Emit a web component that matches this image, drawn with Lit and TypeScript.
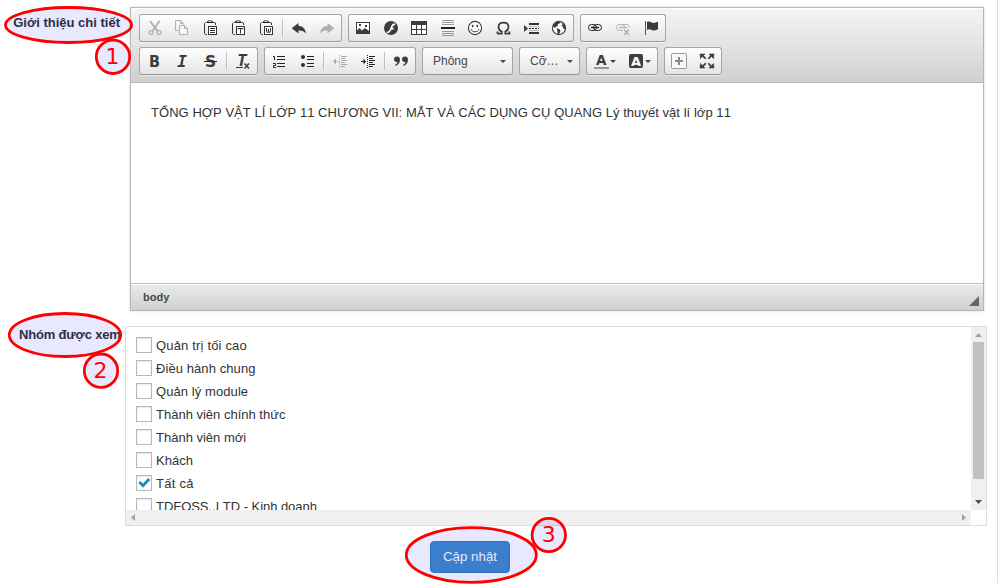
import { LitElement, html, css, svg } from "lit";
import { customElement, property } from "lit/decorators.js";

const D = "#3c3c3c";
const G = "#b0b0b0";
const clip = svg`<path d="M4.500 2.500H3.500L2.500 3.500V13.500L3.500 14.500H5M11.500 2.500H13L13.500 3V5" fill="none" stroke="#333"/><path d="M5 3V1.500L6 .5H10L11 1.500V3z" fill="#222"/><path d="M6.500 1.500h3" stroke="#ccc"/><rect x="6.500" y="6.500" width="8" height="8" fill="#fff" stroke="#333"/>`;
const sans = "DejaVu Sans, sans-serif";
const mono = "DejaVu Sans Mono, monospace";

const icons: Record<string, unknown> = {
  cut: svg`<path d="M4 1L11.500 11M13.500 1L6.500 11" stroke=${G} stroke-width="2" fill="none"/><circle cx="5" cy="12.500" r="1.900" fill="none" stroke=${G} stroke-width="1.300"/><circle cx="13" cy="12.500" r="1.900" fill="none" stroke=${G} stroke-width="1.300"/>`,
  copy: svg`<path d="M4.500 10.500H1.500V.5H6.500L9.500 3.500V4.500M6.500 .5V3.500H9" fill="none" stroke=${G}/><path d="M5.500 5.500H10.500L13.500 8.500V14.500H5.500zM10.500 5.500V8.500H13.500" fill="#fafafa" stroke=${G}/>`,
  paste: svg`${clip}<path d="M8 8.500h5M8 10.500h5M8 12.500h5" stroke="#333"/>`,
  pasteText: svg`${clip}<path d="M8 9.500v-1h5v1M10.500 8.500v5" fill="none" stroke="#333"/>`,
  pasteWord: svg`${clip}<path d="M8.500 8v3l1 2 1-2V9v2l1 2 1-2V8" fill="none" stroke="#333"/>`,
  undo: svg`<path d="M.7 8.300L7.500 3V6C11.500 6 14.500 8.500 15 13.700C13 11 11 10.300 7.500 10.400V13.500z" fill=${D}/>`,
  redo: svg`<path d="M15.300 8.300L8.500 3V6C4.500 6 1.500 8.500 1 13.700C3 11 5 10.300 8.500 10.400V13.500z" fill=${G}/>`,
  image: svg`<rect x="1.500" y="2.500" width="13" height="11" fill="#fff" stroke=${D}/><path d="M2 12V10.500L4.500 8L7 10.500L10 8L14 11V13.500H2z" fill=${D}/><rect x="4" y="4" width="2" height="2" fill=${D}/><rect x="10" y="5" width="2" height="2" fill=${D}/>`,
  flash: svg`<circle cx="8" cy="8" r="7" fill=${D}/><path d="M12.200 3.200C8.500 3.300 8.300 6 7.200 8.500C6.300 10.800 5.500 11.500 3.800 11.800V13.300C6.500 13.300 7.600 11.800 8.500 9.500H10.700V7.700H9.300C10 5.800 10.700 5 12.200 4.900z" fill="#fff"/>`,
  table: svg`<rect x=".5" y="1.500" width="15" height="13" fill="#fff" stroke=${D}/><rect x="0" y="1" width="16" height="4" fill=${D}/><path d="M5.500 5v10M10.500 5v10M1 9.500h14" stroke=${D}/>`,
  rule: svg`<path d="M3 .5h12M3 2.500h12M3 4.500h12M3 11.500h12M3 13.500h12M3 15.500h12" stroke="#999"/><path d="M2 8h14" stroke="#222" stroke-width="2"/>`,
  smiley: svg`<circle cx="8" cy="8" r="6.600" fill="#fff" stroke=${D} stroke-width="1.100"/><ellipse cx="5.700" cy="6" rx=".9" ry="1.300" fill=${D}/><ellipse cx="10.300" cy="6" rx=".9" ry="1.300" fill=${D}/><path d="M4 9C5.200 12.700 10.800 12.700 12 9" fill="none" stroke=${D}/>`,
  omega: svg`<path d="M2.500 14V11.500M2.500 13.700H6.700V11.500C4.200 10.500 3.500 8.500 3.500 7C3.500 4.200 5.500 2.700 8.500 2.700S13.500 4.200 13.500 7C13.500 8.500 12.800 10.500 10.300 11.500V13.700H14.500V11.500" fill="none" stroke=${D} stroke-width="1.700"/>`,
  pageBreak: svg`<path d="M1 5V12L5 8.500z" fill=${D}/><path d="M6 4h10M6 13h10" stroke="#333" stroke-width="2"/><path d="M6 6.500h10M6 10.500h10" stroke="#999" stroke-width=".6"/><path d="M6 8.500h10" stroke="#222" stroke-dasharray="2 1"/>`,
  globe: svg`<circle cx="8" cy="8" r="6.600" fill="#fff" stroke=${D} stroke-width="1.100"/><path d="M2 5L5 2L9 1.800L8.500 3.500L6.500 4.500L7 6.500L5 6.300L4.500 8L2.200 7zM5.500 8.300L8.700 9.200L9.500 11L8 14.300L6.800 14.200L6.300 11zM11 2.500L14 5.500L14.500 9.500L12.500 8.700L12 6.800L10.500 6L11.500 4.500z" fill=${D}/>`,
  link: svg`<g fill="none" stroke="#222"><rect x="1.500" y="4.500" width="8" height="6" rx="3"/><rect x="6.500" y="4.500" width="8" height="6" rx="3"/></g><path d="M4 7.500h8" stroke="#222" stroke-width="1.400"/>`,
  unlink: svg`<g fill="none" stroke=${G}><path d="M8 10.500H4.500a3 3 0 0 1 0-6h2.500a3 3 0 0 1 2.500 2M8 4.500h3.500a3 3 0 0 1 3 3"/></g><path d="M4 7.500h8" stroke=${G} stroke-width="1.400"/><path d="M9 9.500l5 5.500M14 9.500l-5 5.500" stroke=${G} stroke-width="1.500"/>`,
  flag: svg`<path d="M2.500 1v14" stroke="#555"/><path d="M4 2C7 .5 8.500 3.200 10.500 3C12.500 2.900 13 1.800 15 2V9.500C12.500 9.500 12.500 11 10 10.500C7.500 9.800 6.500 8.500 4 10z" fill=${D}/>`,
  bold: svg`<text x="3" y="14" font-family=${sans} font-weight="bold" font-size="16" textLength="11" lengthAdjust="spacingAndGlyphs" fill=${D}>B</text>`,
  italic: svg`<text x="3.200" y="14" font-family=${mono} font-weight="bold" font-style="italic" font-size="16" fill=${D}>I</text>`,
  strike: svg`<text x="3" y="14" font-family=${sans} font-weight="bold" font-size="15.500" fill=${D}>S</text><path d="M2 8.500h13" stroke="#222"/>`,
  clear: svg`<text x="2" y="13" font-family=${mono} font-weight="bold" font-style="italic" font-size="15" textLength="10" lengthAdjust="spacingAndGlyphs" fill=${D}>T</text><path d="M1 14.500h7" stroke=${D}/><path d="M9.500 10.500l4.500 5M14 10.500l-4.500 5" stroke=${D} stroke-width="1.500"/>`,
  numbers: svg`<path d="M2 3.500h1.500V7M2 10.500h2.500v2H2.500v2H5" fill="none" stroke="#222"/><path d="M6 3.500h8M6 6.500h8M6 10.500h8M6 13.500h8" stroke="#222"/>`,
  bullets: svg`<circle cx="4" cy="4" r="2" fill="#333"/><circle cx="4" cy="12" r="2" fill="#333"/><path d="M8 3.500h7M8 6.500h7M8 10.500h7M8 13.500h7" stroke="#222"/>`,
  outdent: svg`<path d="M7.500 2v13M2 8.500h5" stroke="#aaa" stroke-dasharray="1 1"/><path d="M9 3.500h6M9 5.500h4M9 7.500h6M9 9.500h4M9 11.500h6M9 13.500h4" stroke="#aaa"/><path d="M4 5.500V11.500L1 8.500z" fill="#aaa"/>`,
  indent: svg`<path d="M7.500 2v13" stroke="#222" stroke-dasharray="1 1"/><path d="M9 3.500h6M9 5.500h4M9 7.500h6M9 9.500h4M9 11.500h6M9 13.500h4M1 8.500h3" stroke="#222"/><path d="M3.500 5.500V11.500L6 8.500z" fill="#222"/>`,
  quote: svg`<path d="M4 3.500C6.200 3.500 7 5 7 6.800C7 10 5 12.300 2 13V12C3.800 11.200 4.300 10.200 4.300 9C2.500 9.200 1 8 1 6.200C1 4.700 2.200 3.500 4 3.500z" fill=${D}/><path d="M12 3.500C14.200 3.500 15 5 15 6.800C15 10 13 12.300 10 13V12C11.800 11.200 12.300 10.200 12.300 9C10.500 9.200 9 8 9 6.200C9 4.700 10.200 3.500 12 3.500z" fill=${D}/>`,
  color: svg`<text x="3" y="12" font-family=${sans} font-weight="bold" font-size="13.500" fill=${D}>A</text><path d="M1 15h15" stroke="#999" stroke-width="2"/>`,
  background: svg`<rect x="1" y="1" width="14" height="14" rx="2" fill=${D}/><text x="3" y="12.700" font-family=${sans} font-weight="bold" font-size="13" fill="#fff">A</text>`,
  blocks: svg`<rect x=".5" y=".5" width="15" height="15" rx="1" fill="#f8f8f8" stroke="#999"/><path d="M4 8h8M8 4v8" stroke="#888" stroke-width="2"/>`,
  maximize: svg`<path d="M1 1h5L4.500 2.500L7 5.200L6.200 6L3.500 3.500L1.500 5.500zM15 1h-5L11.500 2.500L9 5.200L9.800 6L12.500 3.500L14.500 5.500zM1 15h5L4.500 13.500L7 10.800L6.200 10L3.500 12.500L1.500 10.500zM15 15h-5L11.500 13.500L9 10.800L9.800 10L12.500 12.500L14.500 10.500z" fill=${D} stroke=${D} stroke-width=".6"/>`,
};

@customElement("tool-group")
class ToolGroup extends LitElement {
  @property({ attribute: false }) items: string[] = [];
  static styles = css`
    :host { display: flex; align-items: center; box-sizing: border-box; height: 28px; border: 1px solid #a6a6a6; border-bottom-color: #979797; border-radius: 3px; background: linear-gradient(#fff, #e4e4e4); box-shadow: 0 1px 0 rgba(255,255,255,.5); margin-right: 6px; }
    svg { display: block; width: 16px; height: 16px; margin: 0 6px; overflow: visible; }
    .menu { display: flex; align-items: center; width: 35px; }
    .menu svg { margin-right: 1px; }
    .sep { width: 1px; height: 18px; margin: 0 2px; background: #c0c0c0; box-shadow: 1px 0 1px rgba(255,255,255,.5); }
    .caret { border: 3px solid transparent; border-top-color: #474747; border-bottom: 0; }
  `;
  render() {
    return this.items.map((n) =>
      n === "|" ? html`<span class="sep"></span>`
      : n === "color" || n === "background"
        ? html`<span class="menu"><svg viewBox="0 0 16 16">${icons[n]}</svg><span class="caret"></span></span>`
        : html`<svg viewBox="0 0 16 16">${icons[n]}</svg>`);
  }
}

@customElement("tool-combo")
class ToolCombo extends LitElement {
  @property() label = "";
  static styles = css`
    :host { display: flex; align-items: center; justify-content: space-between; box-sizing: border-box; height: 28px; padding: 0 6px 0 10px; border: 1px solid #a6a6a6; border-bottom-color: #979797; border-radius: 3px; background: linear-gradient(#fff, #e4e4e4); margin-right: 6px; font: 12px/26px "Liberation Sans", sans-serif; color: #474747; }
    .caret { border: 3px solid transparent; border-top-color: #474747; border-bottom: 0; }
  `;
  render() { return html`<span>${this.label}</span><span class="caret"></span>`; }
}

@customElement("app-root")
class AppRoot extends LitElement {
  static styles = css`
    :host { display: block; position: relative; width: 1002px; height: 584px; overflow: hidden; background: #fff; font: 13px/18px "Liberation Sans", sans-serif; color: #333; font-kerning: none; }
    .page { box-sizing: border-box; width: 998px; height: 583px; border-right: 1px solid #ddd; padding-top: 7px; }
    .row { display: flex; }
    .label { width: 120px; flex: none; text-align: right; font-weight: bold; padding-top: 7px; box-sizing: border-box; white-space: nowrap; }
    .label.second { padding: 0 0 0 19px; text-align: left; letter-spacing: -.17px; }
    .editor { box-sizing: border-box; width: 854px; height: 304px; margin-left: 10px; border: 1px solid #b6b6b6; box-shadow: 0 0 3px rgba(0,0,0,.15); display: flex; flex-direction: column; }
    .tools { box-sizing: border-box; height: 75px; padding: 6px 8px; border-bottom: 1px solid #b6b6b6; background: linear-gradient(#f5f5f5, #cfd1cf); box-shadow: inset 0 1px 0 #fff; display: flex; flex-direction: column; gap: 5px; }
    .line { display: flex; }
    .font { width: 91px; }
    .size { width: 61px; }
    .text { flex: 1; padding: 20px; line-height: 20.8px; letter-spacing: .046px; }
    .foot { box-sizing: border-box; height: 27px; border-top: 1px solid #bfbfbf; background: linear-gradient(#ebebeb, #cfd1cf); box-shadow: inset 0 1px 0 #fff; display: flex; justify-content: space-between; align-items: flex-end; padding: 0 4px 4px 12px; font: bold 11px/17px "Liberation Sans", sans-serif; color: #484848; }
    .grip { width: 10px; height: 10px; background: #666; clip-path: polygon(100% 0, 100% 100%, 0 100%); }
    .groups { margin-top: 15px; }
    .panel { box-sizing: border-box; width: 862px; height: 200px; margin-left: 5px; border: 1px solid #ddd; display: grid; grid-template-columns: 845px 15px; grid-template-rows: 183px 15px; }
    .list { overflow: hidden; padding: 7px 10px; }
    .item { display: flex; align-items: flex-start; height: 23px; gap: 4px; white-space: nowrap; line-height: 23px; }
    .item:nth-child(1) { letter-spacing: .17px; }
    .item:nth-child(2), .item:nth-child(3) { letter-spacing: .08px; }
    .item:nth-child(7) { letter-spacing: .27px; }
    .item:nth-child(8) { letter-spacing: -.04px; }
    .box { box-sizing: border-box; flex: none; width: 16px; height: 16px; margin-top: 3px; border: 1px solid #b4b9be; box-shadow: inset 0 1px 2px rgba(0,0,0,.1); }
    .box svg { display: block; width: 14px; height: 14px; }
    .bar { background: #f0f0f0; display: flex; justify-content: space-between; align-items: center; }
    .bar svg { display: block; }
    .v { flex-direction: column; padding: 6px 0; }
    .h { padding: 0 5px; }
    .thumb { width: 11px; height: 137px; background: #c1c1c1; margin-bottom: 17px; }
    .actions { display: flex; padding: 15px 0 0 430px; }
    .save { box-sizing: border-box; width: 80px; height: 32px; border: 1px solid #357ebd; border-radius: 4px; background: #428bca; color: #fff; text-align: center; font: 13.330px/30px "Liberation Sans", sans-serif; padding: 0; }
    .marks { position: absolute; left: 0; top: 0; }
    .shape { fill: rgba(0,0,255,.09); stroke: #f00; stroke-width: 2.800; }
    .num { fill: #f00; font: 22px "DejaVu Sans", sans-serif; text-anchor: middle; }
  `;
  private groups = ["Quản trị tối cao", "Điều hành chung", "Quản lý module", "Thành viên chính thức", "Thành viên mới", "Khách", "Tất cả", "TDFOSS.,LTD - Kinh doanh"];
  render() {
    return html`
      <div class="page">
        <div class="row">
          <div class="label">Giới thiệu chi tiết</div>
          <div class="editor">
            <div class="tools">
              <div class="line">
                <tool-group .items=${["cut", "copy", "paste", "pasteText", "pasteWord", "|", "undo", "redo"]}></tool-group>
                <tool-group .items=${["image", "flash", "table", "rule", "smiley", "omega", "pageBreak", "globe"]}></tool-group>
                <tool-group .items=${["link", "unlink", "flag"]}></tool-group>
              </div>
              <div class="line">
                <tool-group .items=${["bold", "italic", "strike", "|", "clear"]}></tool-group>
                <tool-group .items=${["numbers", "bullets", "|", "outdent", "indent", "|", "quote"]}></tool-group>
                <tool-combo class="font" label="Phông"></tool-combo>
                <tool-combo class="size" label="Cỡ…"></tool-combo>
                <tool-group .items=${["color", "background"]}></tool-group>
                <tool-group .items=${["blocks", "maximize"]}></tool-group>
              </div>
            </div>
            <div class="text">TỔNG HỢP VẬT LÍ LỚP 11 CHƯƠNG VII: MẮT VÀ CÁC DỤNG CỤ QUANG Lý thuyết vật lí lớp 11</div>
            <div class="foot"><span>body</span><span class="grip"></span></div>
          </div>
        </div>
        <div class="row groups">
          <div class="label second">Nhóm được xem</div>
          <div class="panel">
            <div class="list">
              ${this.groups.map((g, i) => html`<div class="item"><span class="box">${i === 6 ? html`<svg viewBox="0 0 14 14"><path d="M2.300 6L6 9.700L12.200 3" fill="none" stroke="#1e8cbe" stroke-width="3"/></svg>` : ""}</span><span>${g}</span></div>`)}
            </div>
            <div class="bar v">
              <svg width="7" height="4"><path d="M0 4L3.500 0L7 4z" fill="#a3a3a3"/></svg>
              <span class="thumb"></span>
              <svg width="7" height="4"><path d="M0 0L3.500 4L7 0z" fill="#505050"/></svg>
            </div>
            <div class="bar h">
              <svg width="4" height="7"><path d="M4 0L0 3.500L4 7z" fill="#a3a3a3"/></svg>
              <svg width="4" height="7"><path d="M0 0L4 3.500L0 7z" fill="#a3a3a3"/></svg>
            </div>
          </div>
        </div>
        <div class="actions"><button class="save">Cập nhật</button></div>
      </div>
      <svg class="marks" width="1002" height="584">
        <ellipse class="shape" cx="68.500" cy="25" rx="63" ry="17.500"/>
        <circle class="shape" cx="113" cy="56.800" r="16.700"/>
        <ellipse class="shape" cx="65" cy="335" rx="55.700" ry="21.500"/>
        <circle class="shape" cx="101" cy="370.700" r="16.700"/>
        <ellipse class="shape" cx="471.300" cy="555" rx="65" ry="27.400"/>
        <circle class="shape" cx="548.800" cy="535" r="16.700"/>
        <text class="num" x="112.500" y="64.300">1</text>
        <text class="num" x="100.500" y="378.300">2</text>
        <text class="num" x="548.700" y="542">3</text>
      </svg>`;
  }
}
